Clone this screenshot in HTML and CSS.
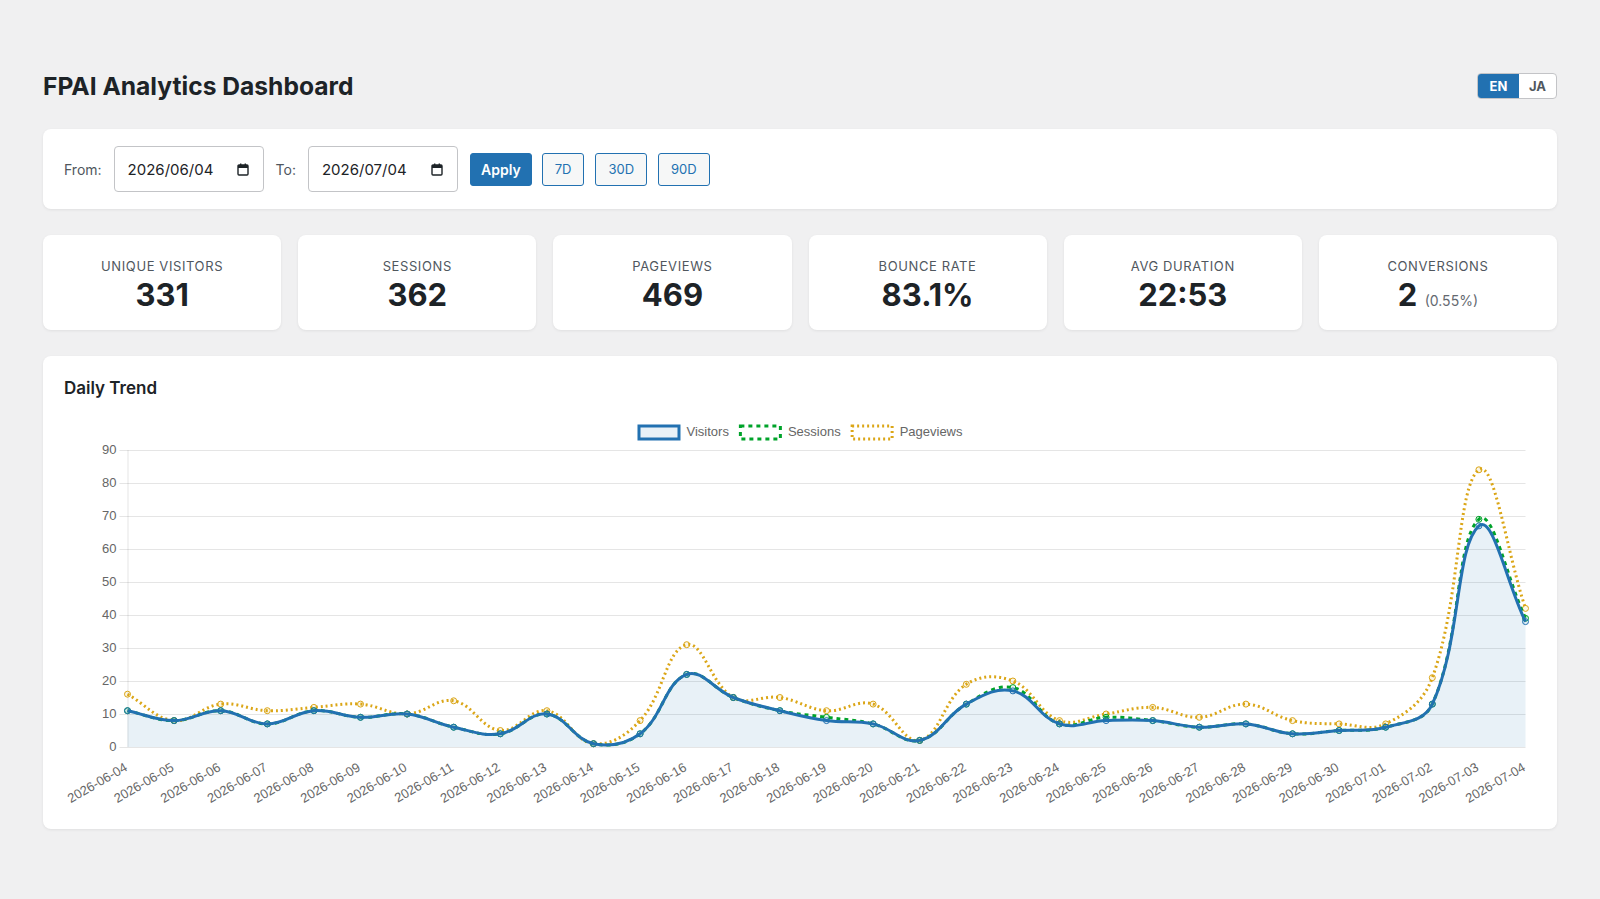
FILE: index.html
```html
<!DOCTYPE html>
<html lang="en">
<head>
    <meta charset="UTF-8">
    <meta name="viewport" content="width=device-width, initial-scale=1.0">
    <title>FPAI Analytics Dashboard</title>
    <link rel="stylesheet" href="styles.css">
</head>
<body>
    <div class="wrap">
        <header class="page-head">
            <h1>FPAI Analytics Dashboard</h1>
            <div class="lang-switch">
                <button class="active">EN</button>
                <button>JA</button>
            </div>
        </header>

        <!-- Periodo -->
        <section class="card filters">
            <label>From:</label>
            <div class="date-field">
                <span>2026/06/04</span>
                <svg class="cal" viewBox="0 0 12 13" width="12" height="13"><rect x="1" y="2" width="10" height="10" rx="1" fill="none" stroke="#1d2327" stroke-width="1.4"/><rect x="1" y="2" width="10" height="3" fill="#1d2327"/><rect x="3" y="0.5" width="1.4" height="2.5" fill="#1d2327"/><rect x="7.6" y="0.5" width="1.4" height="2.5" fill="#1d2327"/></svg>
            </div>
            <label>To:</label>
            <div class="date-field">
                <span>2026/07/04</span>
                <svg class="cal" viewBox="0 0 12 13" width="12" height="13"><rect x="1" y="2" width="10" height="10" rx="1" fill="none" stroke="#1d2327" stroke-width="1.4"/><rect x="1" y="2" width="10" height="3" fill="#1d2327"/><rect x="3" y="0.5" width="1.4" height="2.5" fill="#1d2327"/><rect x="7.6" y="0.5" width="1.4" height="2.5" fill="#1d2327"/></svg>
            </div>
            <button class="btn-primary">Apply</button>
            <div class="ranges">
                <button class="btn-outline">7D</button>
                <button class="btn-outline">30D</button>
                <button class="btn-outline">90D</button>
            </div>
        </section>

        <!-- Riepilogo -->
        <section class="stats">
            <div class="card stat">
                <div class="stat-label">Unique Visitors</div>
                <div class="stat-value">331</div>
            </div>
            <div class="card stat">
                <div class="stat-label">Sessions</div>
                <div class="stat-value">362</div>
            </div>
            <div class="card stat">
                <div class="stat-label">Pageviews</div>
                <div class="stat-value">469</div>
            </div>
            <div class="card stat">
                <div class="stat-label">Bounce Rate</div>
                <div class="stat-value">83.1%</div>
            </div>
            <div class="card stat">
                <div class="stat-label">Avg Duration</div>
                <div class="stat-value">22:53</div>
            </div>
            <div class="card stat">
                <div class="stat-label">Conversions</div>
                <div class="stat-value">2 <small>(0.55%)</small></div>
            </div>
        </section>

        <!-- Andamento giornaliero -->
        <section class="card trend">
            <h2>Daily Trend</h2>
            <div class="chart" id="trendChart"></div>
        </section>
    </div>

    <script src="script.js"></script>
</body>
</html>
```

FILE: styles.css
```css
* {
    box-sizing: border-box;
}
body {
    margin: 0;
    background: #f0f0f1;
    font-family: Inter, "Noto Sans", sans-serif;
    color: #1d2327;
}
.wrap {
    padding: 70px 43px 40px;
}
.page-head {
    display: flex;
    justify-content: space-between;
    align-items: center;
    height: 32px;
    margin-bottom: 27px;
}
.page-head h1 {
    margin: 0;
    font-size: 24.6px;
    font-weight: 700;
}
.lang-switch {
    display: flex;
    border: 1px solid #c3c4c7;
    border-radius: 4px;
    overflow: hidden;
    background: #fff;
}
.lang-switch button {
    border: 0;
    background: none;
    height: 24px;
    padding: 0 10px;
    font: 700 13px Inter, sans-serif;
    color: #50575e;
}
.lang-switch .active {
    width: 41px;
    background: #2271b1;
    color: #fff;
}
.card {
    background: #fff;
    border-radius: 8px;
    box-shadow: 0 1px 3px rgba(0, 0, 0, 0.07);
}
.filters {
    display: flex;
    align-items: center;
    gap: 12px;
    padding: 17px 21px;
    margin-bottom: 26px;
}
.filters label {
    font-size: 14px;
    color: #50575e;
}
.date-field {
    display: flex;
    align-items: center;
    justify-content: space-between;
    width: 150px;
    height: 46px;
    padding: 0 14px 0 13px;
    border: 1px solid #c3c4c7;
    border-radius: 4px;
    font-size: 15px;
}
.ranges {
    display: flex;
    gap: 11px;
    margin-left: -2px;
}
.btn-primary, .btn-outline {
    height: 33px;
    border-radius: 3px;
    font-family: Inter, sans-serif;
}
.btn-primary {
    padding: 0 10px;
    border: 1px solid #2271b1;
    background: #2271b1;
    color: #fff;
    font-size: 14px;
    font-weight: 600;
}
.btn-outline {
    padding: 0 12px;
    border: 1px solid #2271b1;
    background: #f6f7f7;
    color: #2271b1;
    font-size: 13px;
}
.stats {
    display: grid;
    grid-template-columns: repeat(6, 1fr);
    gap: 17px;
    margin-bottom: 26px;
}
.stat {
    padding: 22px 16px 19px;
    text-align: center;
}
.stat-label {
    font-size: 13px;
    line-height: 18px;
    letter-spacing: 0.6px;
    text-transform: uppercase;
    color: #50575e;
}
.stat-value {
    margin-top: 4px;
    font-size: 31px;
    line-height: 32px;
    font-weight: 700;
}
.stat-value small {
    font-size: 14px;
    line-height: 1;
    font-weight: 400;
    color: #646970;
}
.trend {
    padding: 20px 21px;
}
.trend h2 {
    margin: 0 0 12px;
    font-size: 17px;
    line-height: 24px;
    font-weight: 600;
}
.chart {
    height: 397px;
}
.chart svg {
    display: block;
}
```

FILE: script.js
```js
// Dati giornalieri
const visitors  = [11, 8, 11, 7, 11, 9, 10, 6, 4, 10, 1, 4, 22, 15, 11, 8, 7, 2, 13, 17, 7, 8, 8, 6, 7, 4, 5, 6, 13, 67, 38];
const sessions  = [11, 8, 11, 7, 11, 9, 10, 6, 4, 10, 1, 4, 22, 15, 11, 9, 7, 2, 13, 18, 7, 9, 8, 6, 7, 4, 5, 6, 13, 69, 39];
const pageviews = [16, 8, 13, 11, 12, 13, 10, 14, 5, 11, 1, 8, 31, 15, 15, 11, 13, 2, 19, 20, 8, 10, 12, 9, 13, 8, 7, 7, 21, 84, 42];

const labels = [];
for (let d = new Date(Date.UTC(2026, 5, 4)); labels.length < visitors.length; d.setUTCDate(d.getUTCDate() + 1)) {
    labels.push(d.toISOString().slice(0, 10));
}

const datasets = [
    { label: "Visitors", data: visitors, color: "#2271b1", bg: "rgba(34,113,177,0.1)", width: 3, dash: "", fill: true },
    { label: "Sessions", data: sessions, color: "#00a32a", bg: "rgba(0,163,42,0.1)", width: 3, dash: "4 4", fill: false },
    { label: "Pageviews", data: pageviews, color: "#dba617", bg: "rgba(219,166,23,0.1)", width: 3, dash: "2 3", fill: false }
];

const SVG_NS = "http://www.w3.org/2000/svg";
const FONT = "'Liberation Sans', Arial, sans-serif";

function el(name, attrs, parent) {
    const node = document.createElementNS(SVG_NS, name);
    for (const k in attrs) node.setAttribute(k, attrs[k]);
    if (parent) parent.appendChild(node);
    return node;
}

function drawChart(box) {
    const W = box.clientWidth;
    const H = box.clientHeight;
    const svg = el("svg", { width: W, height: H, viewBox: `0 0 ${W} ${H}` }, box);

    const area = { left: 63.5, right: W - 10.5, top: 38, bottom: 335 };
    const maxY = 90;
    const x = i => area.left + i * (area.right - area.left) / (labels.length - 1);
    const y = v => area.bottom - v * (area.bottom - area.top) / maxY;

    // griglia e asse Y
    for (let v = 0; v <= maxY; v += 10) {
        const gy = Math.round(y(v)) + 0.5;
        el("line", { x1: area.left - 8, x2: area.right, y1: gy, y2: gy, stroke: "rgba(0,0,0,0.1)" }, svg);
        const t = el("text", { x: area.left - 11, y: gy, "text-anchor": "end", "dominant-baseline": "middle",
            "font-family": FONT, "font-size": 13, fill: "#666" }, svg);
        t.textContent = v;
    }
    el("line", { x1: area.left + 0.5, x2: area.left + 0.5, y1: area.top, y2: area.bottom, stroke: "rgba(0,0,0,0.1)" }, svg);

    // etichette asse X ruotate
    labels.forEach((lab, i) => {
        const lx = x(i) - 1, ly = area.bottom + 20;
        const t = el("text", { x: lx, y: ly, "text-anchor": "end", "dominant-baseline": "middle",
            transform: `rotate(-30 ${lx} ${ly})`, "font-family": FONT, "font-size": 13, fill: "#666" }, svg);
        t.textContent = lab;
    });

    const clampY = v => Math.min(area.bottom, Math.max(area.top, v));

    // curva con tensione 0.4
    function linePath(pts) {
        const cps = pts.map((p, i) => {
            const prev = pts[i - 1] || p, next = pts[i + 1] || p;
            const d01 = Math.hypot(p.x - prev.x, p.y - prev.y);
            const d12 = Math.hypot(next.x - p.x, next.y - p.y);
            const sum = d01 + d12 || 1;
            const fa = 0.4 * d01 / sum, fb = 0.4 * d12 / sum;
            return {
                inX: p.x - fa * (next.x - prev.x), inY: clampY(p.y - fa * (next.y - prev.y)),
                outX: p.x + fb * (next.x - prev.x), outY: clampY(p.y + fb * (next.y - prev.y))
            };
        });
        let d = `M${pts[0].x},${pts[0].y}`;
        for (let i = 1; i < pts.length; i++) {
            d += ` C${cps[i - 1].outX},${cps[i - 1].outY} ${cps[i].inX},${cps[i].inY} ${pts[i].x},${pts[i].y}`;
        }
        return d;
    }

    // l'ultimo dataset va disegnato per primo
    const series = datasets.map(ds => ({ ds, pts: ds.data.map((v, i) => ({ x: x(i), y: y(v) })) }));
    series.filter(s => s.ds.fill).forEach(s => {
        const d = linePath(s.pts) + ` L${area.right},${area.bottom} L${area.left},${area.bottom} Z`;
        el("path", { d, fill: s.ds.bg, stroke: "none" }, svg);
    });
    series.slice().reverse().forEach(s => {
        el("path", { d: linePath(s.pts), fill: "none", stroke: s.ds.color, "stroke-width": s.ds.width,
            "stroke-dasharray": s.ds.dash, "stroke-linejoin": "round" }, svg);
        s.pts.forEach(p => {
            el("circle", { cx: p.x, cy: p.y, r: 3, fill: s.ds.bg, stroke: s.ds.color, "stroke-width": 1 }, svg);
        });
    });

    // legenda centrata
    const legend = el("g", {}, svg);
    const items = datasets.map(ds => {
        const g = el("g", {}, legend);
        el("rect", { x: 1.5, y: 14, width: 40, height: 13, fill: ds.fill ? ds.bg : "none", stroke: ds.color,
            "stroke-width": ds.width, "stroke-dasharray": ds.dash }, g);
        const t = el("text", { x: 49, y: 20.5, "dominant-baseline": "middle", "font-family": FONT,
            "font-size": 13, fill: "#666" }, g);
        t.textContent = ds.label;
        return { g, w: 49 + t.getComputedTextLength() };
    });
    const total = items.reduce((a, it) => a + it.w, 0) + 10 * (items.length - 1);
    let lx = (W - total) / 2;
    items.forEach(it => {
        it.g.setAttribute("transform", `translate(${lx},0)`);
        lx += it.w + 10;
    });
}

drawChart(document.getElementById("trendChart"));
```
